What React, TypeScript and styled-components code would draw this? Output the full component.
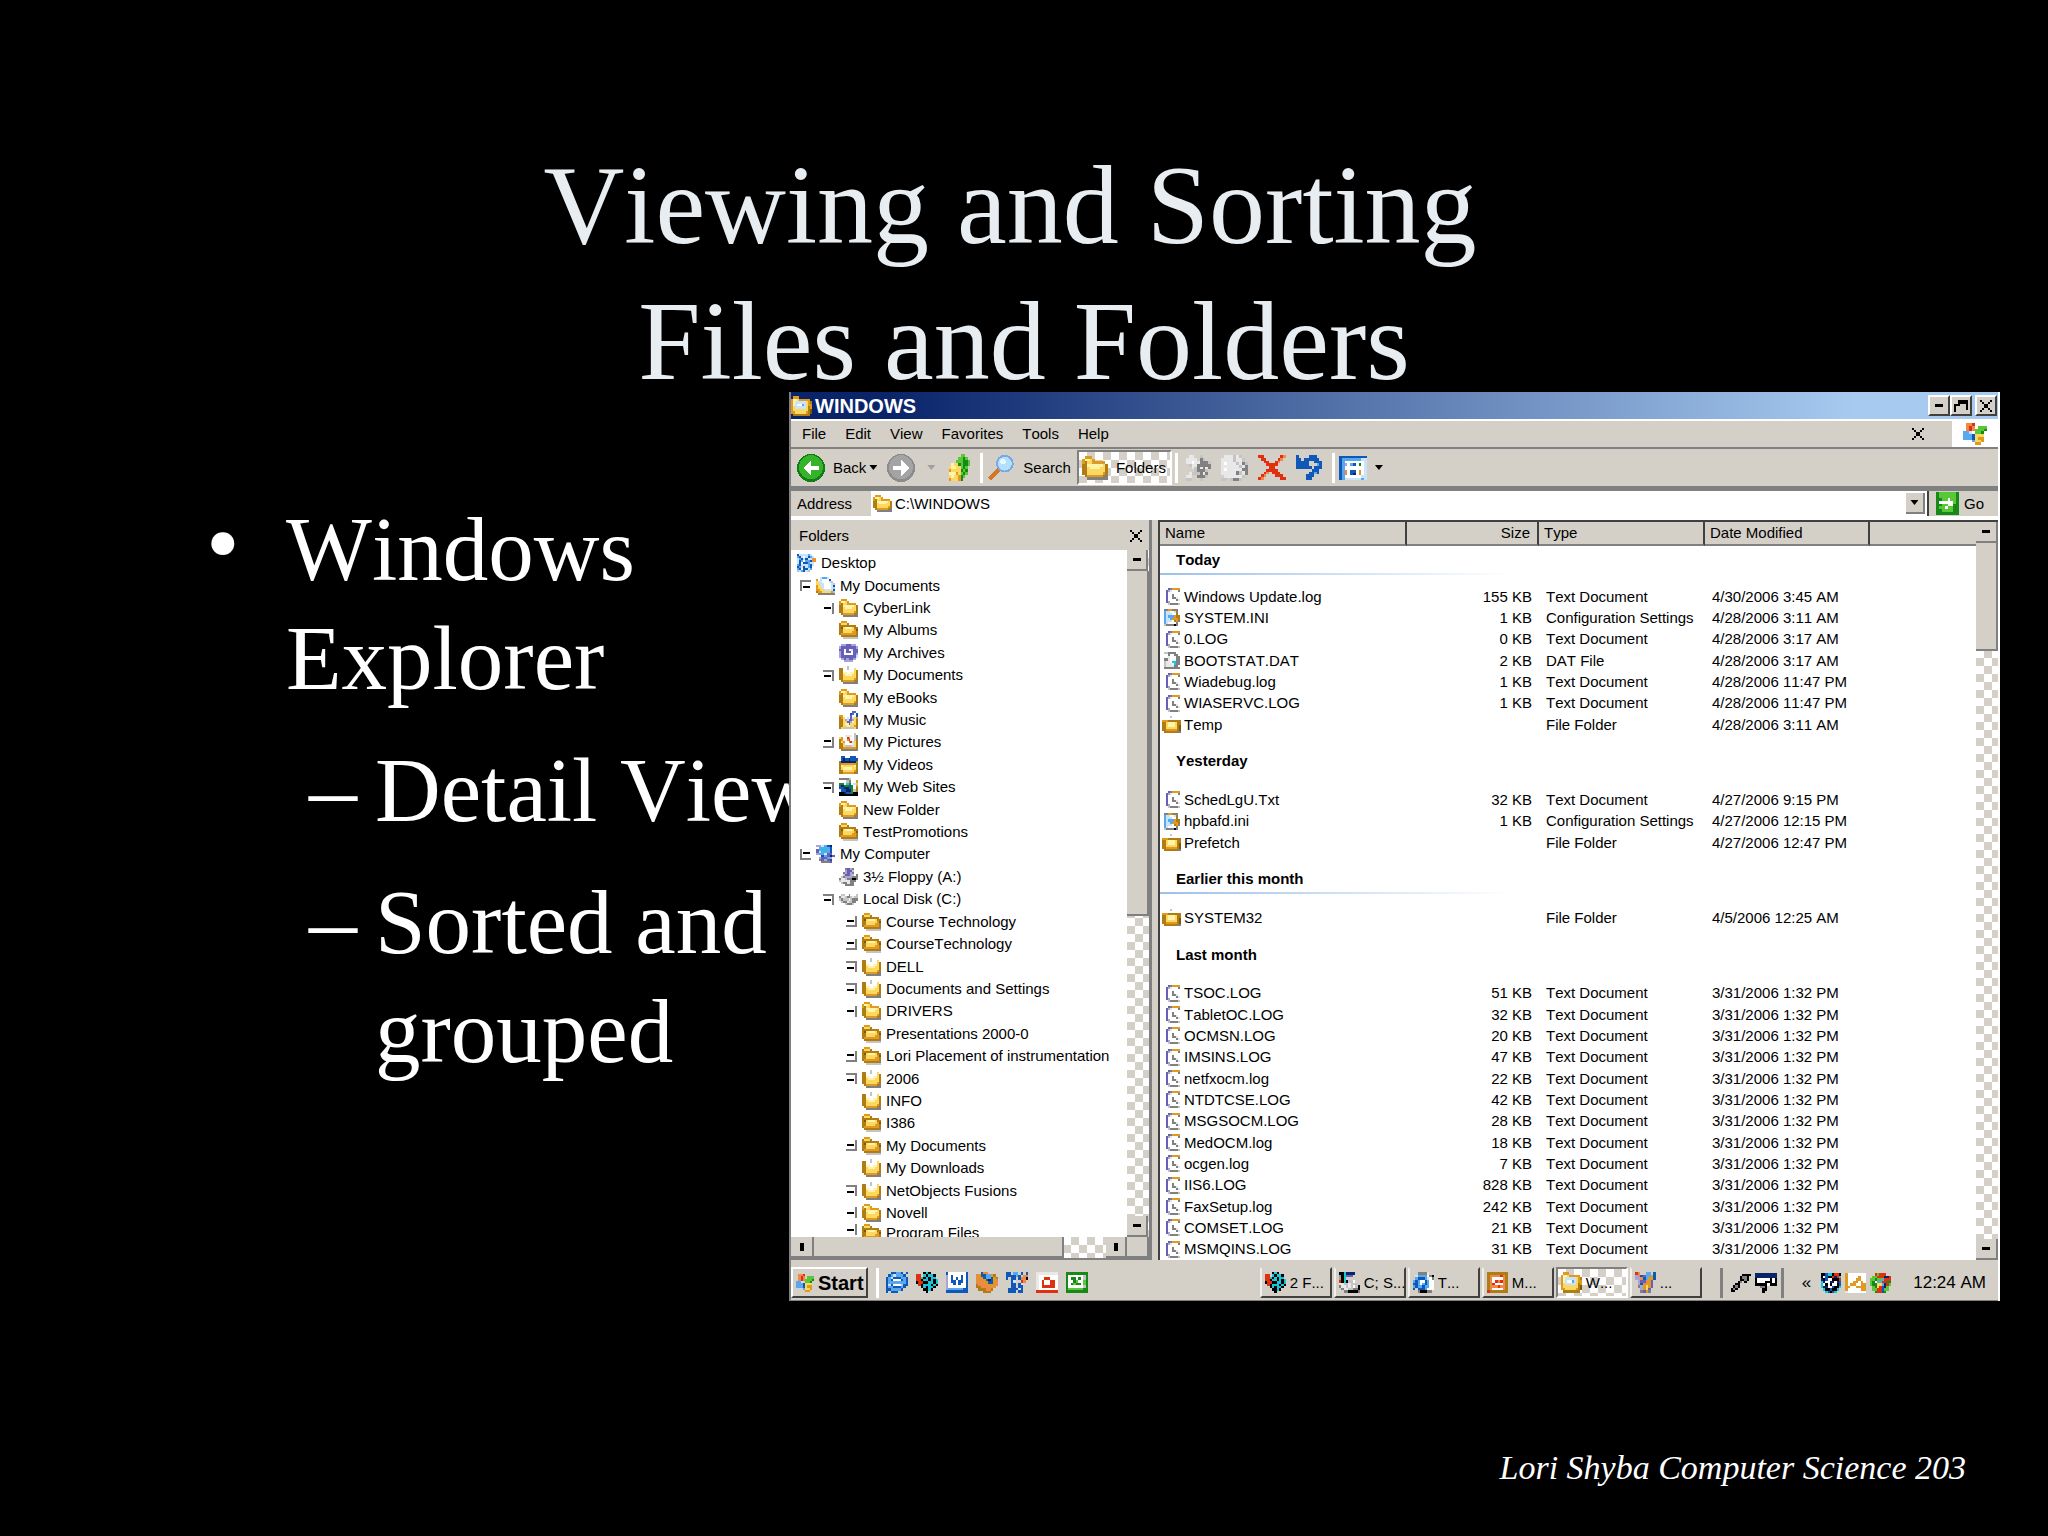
import React, { Fragment } from "react";
import styled, { createGlobalStyle, css } from "styled-components";

const face = "#d4d0c8";
const shadow = "#808080";
const dark = "#404040";
const sans = `"Liberation Sans", Arial, sans-serif`;
const serif = `"Liberation Serif", "Times New Roman", serif`;

const Global = createGlobalStyle`
  *, *::before, *::after { box-sizing: border-box; }
  body { margin: 0; background: #000; }
  button { font: inherit; color: inherit; padding: 0; border: 0; background: none; border-radius: 0; }
`;

const checker = css`
  background: repeating-conic-gradient(${face} 0 25%, #fff 0 50%) 0 0 / 16px 16px;
`;

/* ---------- pixel icons ---------- */

const palette: Record<string, string> = {
  k: "#000000", w: "#ffffff", g: "#808080", l: "#c4c4c4", n: "#e8e8e8",
  o: "#b07c14", y: "#fcd860", h: "#fff4a8", d: "#7c5808", a: "#e09a20",
  b: "#1058b8", c: "#58a8f0", s: "#c8e4fc", i: "#0a246a", t: "#18c8d8",
  r: "#e03010", p: "#6860b8", q: "#a8a4d8", e: "#188818", f: "#58c838", m: "#f08848",
};

const Svg = styled.svg`
  display: block;
  flex: none;
`;

function Pixels({ map, w, h }: { map: string[]; w: number; h: number }) {
  return (
    <Svg width={w} height={h} viewBox={`0 0 ${map[0].length} ${map.length}`} preserveAspectRatio="none" shapeRendering="crispEdges" aria-hidden="true">
      {map.flatMap((row, y) =>
        row.split("").map((ch, x) =>
          palette[ch] ? <rect key={`${x}-${y}`} x={x} y={y} width="1" height="1" fill={palette[ch]} /> : null
        )
      )}
    </Svg>
  );
}

const maps: Record<string, string[]> = {
  folder: [".aaa......", "ahhya.....", "aoyyaaaaa.", "oohhhhhhyo", "ooyhhhhyyo", "ooyyyyyyyo", "ooyyyyyyao", ".oaaaaaaog", "..gggggggg"],
  shut: [".aaa......", "oyyyo.....", "ooooooooo.", "odyhhhhyoo", "ooyyyyyyad", "ooyyyyyaao", "oaaaaaaaao", ".oooooooog", "..llllllll"],
  open: ["....l.....", "oo..l...y.", "oo.www..yo", "oohhwwhhyo", "ooyhhhhyyo", "ooyyyyyyyo", "ooyyyyyyao", ".oaaaaaaog", "..gggggggg"],
  flat: ["....l.....", "..........", "aaaooooooo", "ooyhhhhyoo", "ooyhhhhyod", "ooyyyyyyod", "ooaaaaaaod", ".ooooooogg"],
  docs: ["..scccs...", "a.swwwwb..", "ysswwwwsl.", "yysswwwwsl", "aysswwwwsb", "ayyswwwwsl", "aayysssssb", "oaayyyyyal", ".ogggggggg"],
  desktop: ["bsssscs..", "cbswsbcs.", "scbsbssam", "sbcwccbma", "sbwbbcss.", "cbssscbs.", "bcsbscb..", "cbwbbsc..", "lscbsl..."],
  archive: [".qqppqq.", "qppppppq", "ppwpwspp", "qpwppwpp", "qpwwwwpq", "qpppppps", ".qpqppq.", "..qqqq.."],
  music: [".......pp.", "......bp.b", "aa....p..b", "oay.s.psya", "ooyqsppqyo", "ooyyppqhyo", "ooyhhpyyyo", "ooyyhhyyao", "oyllllllyg"],
  pictures: ["........l.", "...nnnn.lg", "ya.wrmw.lg", "oa.wmrw.lo", "oyawwmrsyo", "ooywwwwnyo", "ooyllllsyo", "ooaaaaaaao", ".ogggggggg"],
  videos: [".bb...bbb.", ".bibbibbbb", "oiiiiiiiio", "oaaaaaaaao", "ohyyyyyyho", "oyhhhhhyyo", "ooyyyyyyao", "ooaaaaaaog"],
  web: ["ggggl...", "...lg..a", "ee.te.sl", "bieebe.a", "bbiibe.o", "nbbiielo", "kkibbekk", "kkkkkkkk"],
  computer: ["qqscbi.", ".ccccb.", "pcttcb.", "pscccb.", "qccspp.", "..bcpip", ".qppcq.", ".gpqpb.", "..gggp."],
  floppy: ["...gpqg..", "...qppl..", "..gqpqg..", "..lppql.g", ".lgqqqggg", "gnnlggkkg", "lnnnnggg.", ".lggngg..", "...gggg.."],
  disk: [".ll..g...l", "gnnlgglnll", "lglllwlggg", ".lggnllgg.", "...lgggl.."],
  text: [".pgaaaa", "pqnwwwg", "p.wwwww", "p.wgwww", "p.wggnw", "p.wwwgn", "pqwwwww", ".lggggl"],
  ini: ["ggaagog.", "csswwsg.", "cssswwo.", "cscccaoo", "csscaaao", "cssswoag", "cswwwwg.", "lggggkg."],
  dat: ["llgggg..", "..gwwgg.", "..nwwwgg", "ggnwwwgg", "lnnwttgg", "lnnnwtgg", "lnnnngg.", "gggggggg"],
  win: [".aaa......", "ahhyaaaaa.", "ahsssssyao", "ahswwcsyaa", "aysssssyoa", "ayyyyyyyod", "aayyyyyaod", ".oooooooo."],
  up: [".....ff..", "....ffef.", "...fffeef", ".hyyefeef", "yhhyyfef.", "ayyyyefe.", "hhhayfef.", "yhyyaef..", "ayyyae..."],
  copy: [".nn..l...", "nnnn.gl..", "nnwnngggl", ".lnnggggg", "..nlgngng", "...lgggl.", ".nlllgng.", "nn..gggl.", "ll...l..."],
  move: [".nnnlnl..", "nnnnlnnl.", "nwnnnlngl", "nnnnnnlng", "nwnnnnngg", "nnnnnglng", ".nnnnnnl.", "ll.lggl.."],
  del: ["rr......rm", ".rr....rm.", "..rr..rm..", "...rrrr...", "....rr....", "...rrrr...", "..rm.rrr..", ".rm...rrr.", "rm......rr"],
  undo: ["b....bbb..", "bb.bbbbbb.", "bbbbb..bbb", "bbbbb...cb", "bbbbbb.bbb", "......bbb.", ".....bbcb.", "....bbb...", "....bb...."],
  view: ["bbbbbbbbbb", "bcccccccss", "bcwwwwwwws", "bcqwcbwews", "bcwwwwwwws", "bcwwwwwwws", "bcmwbbwaws", "bcmwbiwaws", "bcwwwwwwss", "bcsssssscs"],
  go: ["effffffe", "effffffe", "eeffwffe", "ewwwwwfe", "eeffwwee", "effwffee", "eeffffee", "eeeeeeee"],
  flag: [".mmr....", ".mrm.fff", ".mrmfffe", "ccs.ffe.", "cccbyyy.", "cccbyaa.", "...cyya.", "....aa.."],
  ie: ["..bbccb.b", ".bcscccb.", "bcsbbbccb", "bcbwwwbcb", "bcccccccb", "bsbwwwlbb", "bccbbbcb.", "bbccccb..", "b.bbb...."],
  media: ["...ktk...", "rr.tkttk.", "rrtktktt.", "rrkttktkt", "krrkkttkt", ".rktttktk", "..ktkttk.", "...kktk..", "....k...."],
  word: ["bwwwwwwwb", "qwbwwwbwb", "qwbwbwbwb", "qwbbwbbwb", "qwwbwbwwb", "qwwwwwwwb", "qccccccbb", "bbbbbbbbb"],
  fox: ["..bmm....", "mabbccao.", "maabccbao", "mmaabibam", "mmmaabbam", "ommmmaaam", "oommmmam.", ".ooommo..", "...ooo..."],
  tools: ["bb.cc.b.b", "bbbbcb.mm", "b.bb.bmmk", "..bs..rm.", "..bb.bs..", "..bb.bb..", ".bbbbsb..", ".bbb.bb.."],
  ppt: ["nnnnnnnn", "nwwwwwww", "nwwrrwww", "nwrwwrrw", "nwrwwrrw", "nwrrrrrw", "nwwwwwww", "rrrrrrrr"],
  excel: ["eeeeeeeee", "ewwwwwwle", "eweewewle", "ewwefwwfe", "ewefeewfe", "ewwwwwwle", "effffffee", "eeeeeeeee"],
  notes: ["kktiiii..", "tktppp...", "mkt......", "rktkllw..", "nnllnlll.", "gnnlnlwlk", ".gnnllggk", "..ggkkkkg"],
  page: ["..ggggn..", ".sccccwgk", ".cbbbcswg", "cbcwwbcww", "bbcwcbcww", "cbccbccww", "b.bbbcwww", "..gkkkgg."],
  deck: ["oooooooo", "ommmmrmo", "omwwwwmo", "omwrmrmo", "omrwwwmo", "ommmrmmo", "omwwwwmo", "rooooooo"],
  paint: ["rm..cc.b", "qmbpccab", "qqmbcaab", ".qppmap.", ".qbmaap.", ".gqayap.", "..qayp..", "..gpag.."],
  plug: [".....kkkk", "....kggk.", "....kkgk.", "...kg.k..", "..kk.....", ".kgk.....", "kgk......", "kk......."],
  screen: ["iiiiiiiii", "iiiiiiiii", "kwwwwwkwk", "kwwwkkkwk", "kkkkkwkkk", "..ggk....", "...kk....", "...k....."],
  shield: ["kkbttkrrk", "kwbkkrirt", "ikbwwkkkr", "tiwwiiwib", "twkwkwwkb", "tiiwwbkkt", ".tkkbkkt.", "..tbkbt.."],
  wave: ["awwwwwww", "awwwwaww", "awwwaaww", "awwaawaw", "awaawwaa", "aawwaaaa", "awwwwwaa", "nwwwwwww"],
  ball: ["..rfrrr..", ".ffrrriir", "ffeffcrrr", "fewccrree", "feeyycirf", ".feyrbif.", ".ffrrbff.", "..errbe.."],
};

const Icon = ({ n, w = 20, h = 18 }: { n: string; w?: number; h?: number }) => <Pixels map={maps[n]} w={w} h={h} />;

function Circle({ tone, back }: { tone: "green" | "grey"; back?: boolean }) {
  const [edge, fill] = tone === "green" ? ["#147c14", "#34b428"] : ["#8c8c8c", "#a4a4a4"];
  return (
    <Svg width="28" height="28" viewBox="0 0 14 14" shapeRendering="crispEdges" aria-hidden="true">
      <circle cx="7" cy="7" r="7" fill={edge} />
      <circle cx="7" cy="6.6" r="6" fill={fill} />
      <path d={back ? "M3 7l4-4v3h4v2H7v3z" : "M11 7L7 3v3H3v2h4v3z"} fill="#fff" />
    </Svg>
  );
}

const Lens = () => (
  <Svg width="28" height="27" viewBox="0 0 14 14" shapeRendering="crispEdges" aria-hidden="true">
    <path d="M1 13l5-5" stroke="#d07828" strokeWidth="2.4" />
    <circle cx="9" cy="5" r="4.6" fill="#78a8e8" />
    <circle cx="9" cy="5" r="3.6" fill="#b4e0fc" />
    <circle cx="8" cy="4" r="1.4" fill="#e8f8ff" />
  </Svg>
);

/* ---------- slide ---------- */

const Slide = styled.main`
  position: relative;
  display: flex;
  flex-direction: column;
  min-height: 100vh;
  padding: 137px 0 46px;
  background: #000;
  color: #fff;
  font-family: ${serif};
  font-kerning: none;
  overflow: hidden;
`;

const Title = styled.h1`
  margin: 0 0 86px;
  text-align: center;
  font-size: 112px;
  line-height: 136px;
  font-weight: 400;
  color: #e8edf2;
`;

const Points = styled.ul`
  list-style: none;
  margin: 0;
  padding: 0 0 0 206px;
  width: 860px;
  font-size: 91px;
  line-height: 109px;
`;

const Point = styled.li`
  display: grid;
  grid-template-columns: 80px 1fr;
  &::before { content: "•"; font-size: 96px; line-height: 96px; }
`;

const SubPoints = styled.ul`
  list-style: none;
  grid-column: 1 / -1;
  margin: 0;
  padding: 0 0 0 103px;
`;

const SubPoint = styled.li`
  display: grid;
  grid-template-columns: 66px 1fr;
  margin-top: 23px;
  &::before { content: "–"; font-size: 96px; line-height: 106px; }
`;

const Footer = styled.footer`
  margin-top: auto;
  padding-right: 82px;
  text-align: right;
  font-size: 34px;
  line-height: 44px;
  font-style: italic;
`;

/* ---------- explorer window ---------- */

const Win = styled.section`
  position: absolute;
  left: 789px;
  right: 48px;
  top: 392px;
  height: 909px;
  display: flex;
  flex-direction: column;
  border: solid ${shadow};
  border-width: 0 2px 0 2px;
  border-right-color: #fff;
  background: ${face};
  color: #000;
  font-family: ${sans};
  font-size: 15px;
  line-height: 18px;
`;

const TitleBar = styled.header`
  display: flex;
  align-items: center;
  gap: 3px;
  flex: none;
  height: 29px;
  padding-right: 1px;
  border-bottom: 2px solid #fff;
  background: linear-gradient(90deg, #0a246a 8%, #a6caf0 88%);
`;

const WinTitle = styled.h2`
  margin: 0;
  flex: 1;
  font-size: 20px;
  line-height: 24px;
  color: #fff;
`;

const CapButton = styled.button<{ $apart?: boolean }>`
  display: grid;
  place-items: center;
  width: 22px;
  height: 21px;
  margin-left: ${(p) => (p.$apart ? 0 : -3)}px;
  background: ${face};
  border: solid ${dark};
  border-width: 2px;
  border-top-color: #fff;
  border-left-color: #fff;
`;

const MenuBar = styled.nav`
  display: flex;
  flex: none;
  align-items: center;
  height: 28px;
  padding-left: 11px;
  gap: 19px;
  border-bottom: 2px solid ${shadow};
`;

const DockClose = styled.button`
  margin: 0 9px 0 auto;
`;

const Brand = styled.div`
  display: grid;
  place-items: center;
  width: 46px;
  align-self: stretch;
  background: #fff;
`;

const ToolBar = styled.div`
  display: flex;
  flex: none;
  align-items: center;
  height: 37px;
  padding-left: 6px;
`;

const Tool = styled.button<{ $gap?: number }>`
  display: flex;
  align-items: center;
  gap: 8px;
  margin-right: ${(p) => p.$gap ?? 10}px;
`;

const Pressed = styled(Tool)`
  height: 35px;
  padding: 0 4px 0 3px;
  border: solid #fff;
  border-width: 2px;
  border-top-color: ${shadow};
  border-left-color: ${shadow};
  ${checker}
`;

const Rule = styled.span<{ $c?: string; $gap?: number }>`
  width: 3px;
  height: 30px;
  margin-right: ${(p) => p.$gap ?? 4}px;
  background: ${(p) => p.$c ?? "#fff"};
`;

const Arrow = styled.span<{ $dim?: boolean }>`
  width: 8px;
  height: 5px;
  background: ${(p) => (p.$dim ? "#a0a0a0" : "#000")};
  clip-path: polygon(0 0, 100% 0, 50% 100%);
`;

const AddressBar = styled.form`
  display: flex;
  flex: none;
  align-items: center;
  height: 34px;
  border-top: 5px solid ${shadow};
  border-bottom: 4px solid #fff;
`;

const AddressLabel = styled.label`
  width: 80px;
  padding-left: 6px;
`;

const Combo = styled.div`
  display: flex;
  flex: 1;
  align-items: center;
  height: 25px;
  padding: 2px;
  gap: 3px;
  background: #fff;
  border-right: 2px solid ${dark};
`;

const AddressInput = styled.input`
  flex: 1;
  min-width: 0;
  padding: 0;
  border: 0;
  outline: 0;
  font: inherit;
  background: none;
`;

const Go = styled.button`
  display: flex;
  align-items: center;
  gap: 5px;
  margin: 0 14px 0 7px;
`;

const Bevel = styled.button<{ $w?: number; $h?: number }>`
  display: grid;
  place-items: center;
  flex: none;
  width: ${(p) => p.$w ?? 21}px;
  height: ${(p) => p.$h ?? 21}px;
  background: ${face};
  border: solid ${shadow};
  border-width: 0 2px 2px 0;
`;

const Panes = styled.div`
  display: flex;
  flex: 1;
  min-height: 0;
`;

const FolderPane = styled.aside`
  display: flex;
  flex-direction: column;
  width: 361px;
  border-right: 3px solid ${shadow};
  border-bottom: 2px solid ${shadow};
`;

const PaneHead = styled.div`
  display: flex;
  flex: none;
  align-items: center;
  justify-content: space-between;
  height: 30px;
  padding: 2px 7px 0 8px;
`;

const TreeWrap = styled.div`
  display: flex;
  flex: 1;
  min-height: 0;
  background: #fff;
`;

const Tree = styled.ul`
  list-style: none;
  margin: 0;
  padding: 2px 0 0;
  flex: 1;
  min-width: 0;
  display: flex;
  flex-direction: column;
  overflow: hidden;
`;

const Node = styled.li<{ $level: number; $last?: boolean }>`
  display: flex;
  align-items: ${(p) => (p.$last ? "flex-start" : "center")};
  gap: 5px;
  flex: ${(p) => (p.$last ? "0 0 13px" : "1 1 0")};
  min-height: 0;
  padding-left: ${(p) => (p.$level < 0 ? 6 : 9 + p.$level * 23)}px;
  white-space: nowrap;
  overflow: hidden;
`;

const Toggle = styled.button<{ $kind: string }>`
  flex: none;
  width: 11px;
  height: 11px;
  border: 0 solid ${shadow};
  border-width: ${(p) => p.$kind};
  background: linear-gradient(#000, #000) center / 7px 2px no-repeat;
`;

const Blank = styled.span`
  flex: none;
  width: 11px;
`;

const Scroll = styled.div<{ $h?: boolean }>`
  display: flex;
  flex: none;
  flex-direction: ${(p) => (p.$h ? "row" : "column")};
  ${(p) => (p.$h ? "height: 21px" : "width: 22px")};
  ${checker}
`;

const Thumb = styled.div<{ $size: string; $h?: boolean }>`
  ${(p) => (p.$h ? "width" : "height")}: ${(p) => p.$size};
  background: ${face};
  border: solid ${shadow};
  border-width: 0 2px 2px 0;
`;

const Track = styled.div`
  flex: 1;
`;

const Mark = styled.span`
  width: 8px;
  height: 3px;
  background: #000;
`;

const Tick = styled.span`
  width: 4px;
  height: 8px;
  background: #000;
`;

const ListPane = styled.div`
  display: flex;
  flex: 1;
  min-width: 0;
  margin-left: 6px;
  border-left: 2px solid ${dark};
  border-top: 2px solid ${dark};
  background: #fff;
`;

const TableBox = styled.div`
  flex: 1;
  min-width: 0;
  height: 100%;
`;

const Table = styled.table`
  width: 100%;
  height: 100%;
  table-layout: fixed;
  border-collapse: separate;
  border-spacing: 0;
  white-space: nowrap;
`;

const Th = styled.th<{ $right?: boolean }>`
  height: 24px;
  padding: 0 7px 0 5px;
  text-align: ${(p) => (p.$right ? "right" : "left")};
  font-weight: 400;
  background: ${face};
  border-right: 2px solid ${dark};
  border-bottom: 2px solid ${shadow};
  &:last-child { border-right: 0; }
`;

const Td = styled.td<{ $right?: boolean }>`
  padding: 0 ${(p) => (p.$right ? 7 : 0)}px 0 ${(p) => (p.$right ? 0 : 7)}px;
  text-align: ${(p) => (p.$right ? "right" : "left")};
  overflow: hidden;
`;

const NameCell = styled.div`
  display: flex;
  align-items: center;
  gap: 4px;
  margin-left: -5px;
  height: 18px;
`;

const IconSlot = styled.span`
  display: grid;
  justify-items: end;
  width: 18px;
`;

const GroupTh = styled.th<{ $first?: boolean }>`
  height: ${(p) => (p.$first ? 40 : 54)}px;
  padding: ${(p) => (p.$first ? "0 0 10px" : "0")};
  text-align: left;
`;

const GroupName = styled.div<{ $line?: boolean }>`
  width: 350px;
  padding: 4px 0 4px 16px;
  border-bottom: 2px solid;
  border-image: ${(p) => (p.$line ? "linear-gradient(90deg, #9cc0e8, #fff)" : "linear-gradient(#fff, #fff)")} 1;
`;

const TaskBar = styled.footer`
  display: flex;
  flex: none;
  align-items: center;
  height: 41px;
  padding: 3px 12px 0 0;
  border-top: 2px solid ${face};
  border-bottom: 1px solid ${shadow};
  font-size: 17px;
  white-space: nowrap;
`;

const Start = styled.button`
  display: flex;
  align-items: center;
  gap: 4px;
  width: 77px;
  height: 31px;
  padding-left: 3px;
  margin-right: 8px;
  border: solid ${dark};
  border-width: 2px;
  border-top-color: #fff;
  border-left-color: #fff;
  font-size: 20px;
  font-weight: 700;
`;

const Quick = styled.div`
  display: flex;
  flex: 1;
  gap: 8px;
`;

const Task = styled.button<{ $on?: boolean }>`
  display: flex;
  align-items: center;
  gap: 4px;
  width: 72px;
  height: 31px;
  margin-right: 2px;
  padding-left: 3px;
  font-size: 15px;
  border: solid ${dark};
  border-width: 2px;
  border-top-color: ${(p) => (p.$on ? shadow : face)};
  border-left-color: ${(p) => (p.$on ? shadow : "#f0f0ec")};
  ${(p) => p.$on && checker}
  ${(p) => p.$on && "border-bottom-color: #fff; border-right-color: #fff;"}
`;

const Tray = styled.div`
  display: flex;
  align-items: center;
  gap: 4px;
  margin-left: 16px;
`;

const Chevron = styled.button`
  margin: 0 6px 0 2px;
`;

const Clock = styled.time`
  margin-left: 18px;
`;

const Cross = () => (
  <Svg width="12" height="12" viewBox="0 0 6 6" shapeRendering="crispEdges" aria-hidden="true">
    <path d="M0 0h1v1h1v1h2V1h1V0h1v1H5v1H4v2h1v1h1v1H5V5H4V4H2v1H1v1H0V5h1V4h1V2H1V1H0z" fill="#000" />
  </Svg>
);

const F = "folder", S = "shut", O = "open";
const TL = "2px 0 0 2px", BL = "0 0 2px 2px", TR = "2px 2px 0 0", BR = "0 2px 2px 0", R = "0 2px 0 0";

const tree: [number, string, string, string?][] = [
  [-1, "desktop", "Desktop"],
  [0, "docs", "My Documents", TL],
  [1, F, "CyberLink", R],
  [1, S, "My Albums"],
  [1, "archive", "My Archives"],
  [1, O, "My Documents", TR],
  [1, F, "My eBooks"],
  [1, "music", "My Music"],
  [1, "pictures", "My Pictures", BR],
  [1, "videos", "My Videos"],
  [1, "web", "My Web Sites", TR],
  [1, F, "New Folder"],
  [1, S, "TestPromotions"],
  [0, "computer", "My Computer", BL],
  [1, "floppy", "3½ Floppy (A:)"],
  [1, "disk", "Local Disk (C:)", TR],
  [2, S, "Course Technology", BR],
  [2, S, "CourseTechnology", BR],
  [2, O, "DELL", TR],
  [2, O, "Documents and Settings", TR],
  [2, F, "DRIVERS", R],
  [2, S, "Presentations 2000-0"],
  [2, S, "Lori Placement of instrumentation", BR],
  [2, O, "2006", TR],
  [2, O, "INFO"],
  [2, S, "I386"],
  [2, S, "My Documents", BR],
  [2, O, "My Downloads"],
  [2, O, "NetObjects Fusions", TR],
  [2, F, "Novell", R],
  [2, S, "Program Files", R],
];

type FileRow = [string, string, string, string, string];
const T = "Text Document", C = "Configuration Settings", D = "File Folder";
const groups: { name: string; line?: boolean; rows: FileRow[] }[] = [
  {
    name: "Today", line: true, rows: [
      ["text", "Windows Update.log", "155 KB", T, "4/30/2006 3:45 AM"],
      ["ini", "SYSTEM.INI", "1 KB", C, "4/28/2006 3:11 AM"],
      ["text", "0.LOG", "0 KB", T, "4/28/2006 3:17 AM"],
      ["dat", "BOOTSTAT.DAT", "2 KB", "DAT File", "4/28/2006 3:17 AM"],
      ["text", "Wiadebug.log", "1 KB", T, "4/28/2006 11:47 PM"],
      ["text", "WIASERVC.LOG", "1 KB", T, "4/28/2006 11:47 PM"],
      ["flat", "Temp", "", D, "4/28/2006 3:11 AM"],
    ],
  },
  {
    name: "Yesterday", rows: [
      ["text", "SchedLgU.Txt", "32 KB", T, "4/27/2006 9:15 PM"],
      ["ini", "hpbafd.ini", "1 KB", C, "4/27/2006 12:15 PM"],
      ["flat", "Prefetch", "", D, "4/27/2006 12:47 PM"],
    ],
  },
  { name: "Earlier this month", line: true, rows: [["flat", "SYSTEM32", "", D, "4/5/2006 12:25 AM"]] },
  {
    name: "Last month", rows: [
      ["text", "TSOC.LOG", "51 KB", T, "3/31/2006 1:32 PM"],
      ["text", "TabletOC.LOG", "32 KB", T, "3/31/2006 1:32 PM"],
      ["text", "OCMSN.LOG", "20 KB", T, "3/31/2006 1:32 PM"],
      ["text", "IMSINS.LOG", "47 KB", T, "3/31/2006 1:32 PM"],
      ["text", "netfxocm.log", "22 KB", T, "3/31/2006 1:32 PM"],
      ["text", "NTDTCSE.LOG", "42 KB", T, "3/31/2006 1:32 PM"],
      ["text", "MSGSOCM.LOG", "28 KB", T, "3/31/2006 1:32 PM"],
      ["text", "MedOCM.log", "18 KB", T, "3/31/2006 1:32 PM"],
      ["text", "ocgen.log", "7 KB", T, "3/31/2006 1:32 PM"],
      ["text", "IIS6.LOG", "828 KB", T, "3/31/2006 1:32 PM"],
      ["text", "FaxSetup.log", "242 KB", T, "3/31/2006 1:32 PM"],
      ["text", "COMSET.LOG", "21 KB", T, "3/31/2006 1:32 PM"],
      ["text", "MSMQINS.LOG", "31 KB", T, "3/31/2006 1:32 PM"],
    ],
  },
];

const quick = ["ie", "media", "word", "fox", "tools", "ppt", "excel"];
const tasks: [string, string][] = [["media", "2 F..."], ["notes", "C; S..."], ["page", "T..."], ["deck", "M..."], ["win", "W..."], ["paint", "..."]];

export default function App() {
  return (
    <>
      <Global />
      <Slide>
        <Title>
          Viewing and Sorting&nbsp;
          <br />
          Files and Folders
        </Title>
        <Points>
          <Point>
            Windows Explorer
            <SubPoints>
              <SubPoint>Detail View</SubPoint>
              <SubPoint>Sorted and grouped</SubPoint>
            </SubPoints>
          </Point>
        </Points>
        <Footer>Lori Shyba Computer Science 203</Footer>

        <Win aria-label="WINDOWS">
          <TitleBar>
            <Icon n="win" w={21} h={20} />
            <WinTitle>WINDOWS</WinTitle>
            <CapButton aria-label="Minimize"><Mark /></CapButton>
            <CapButton aria-label="Restore">
              <Svg width="14" height="12" viewBox="0 0 7 6" shapeRendering="crispEdges" aria-hidden="true">
                <path d="M2 0h5v5H6V2H3v1H1v3H0V2h2z" fill="#000" />
              </Svg>
            </CapButton>
            <CapButton $apart aria-label="Close"><Cross /></CapButton>
          </TitleBar>
          <MenuBar>
            {["File", "Edit", "View", "Favorites", "Tools", "Help"].map((m) => <button key={m}>{m}</button>)}
            <DockClose aria-label="Close pane"><Cross /></DockClose>
            <Brand><Icon n="flag" w={24} h={22} /></Brand>
          </MenuBar>
          <ToolBar>
            <Tool $gap={3}><Circle tone="green" back />Back</Tool>
            <Tool $gap={10} aria-label="Back history"><Arrow /></Tool>
            <Tool $gap={12} aria-label="Forward"><Circle tone="grey" /></Tool>
            <Tool $gap={14} aria-label="Forward history"><Arrow $dim /></Tool>
            <Tool aria-label="Up"><Icon n="up" w={21} h={27} /></Tool>
            <Rule />
            <Tool $gap={6}><Lens />Search</Tool>
            <Pressed $gap={3}><Icon n="folder" w={26} h={24} />Folders</Pressed>
            <Rule $gap={8} />
            <Tool aria-label="Copy to"><Icon n="copy" w={25} h={26} /></Tool>
            <Tool aria-label="Move to"><Icon n="move" w={27} h={26} /></Tool>
            <Tool aria-label="Delete"><Icon n="del" w={28} h={25} /></Tool>
            <Tool aria-label="Undo"><Icon n="undo" w={26} h={25} /></Tool>
            <Rule />
            <Tool aria-label="Views"><Icon n="view" w={28} h={24} /><Arrow /></Tool>
          </ToolBar>
          <AddressBar onSubmit={(e) => e.preventDefault()}>
            <AddressLabel htmlFor="address">Address</AddressLabel>
            <Combo>
              <Icon n="folder" w={19} h={17} />
              <AddressInput id="address" defaultValue="C:\WINDOWS" />
              <Bevel type="button" $w={19} aria-label="Show addresses"><Arrow /></Bevel>
            </Combo>
            <Go><Icon n="go" w={23} h={23} />Go</Go>
          </AddressBar>
          <Panes>
            <FolderPane>
              <PaneHead>Folders<button aria-label="Close folders"><Cross /></button></PaneHead>
              <TreeWrap>
                <Tree>
                  {tree.map(([level, icon, label, box], i) => (
                    <Node key={i} $level={level} $last={i === tree.length - 1}>
                      {level >= 0 && (box ? <Toggle $kind={box} aria-label={`Toggle ${label}`} /> : <Blank />)}
                      <Icon n={icon} w={19} h={icon === "disk" ? 11 : 18} />
                      {label}
                    </Node>
                  ))}
                </Tree>
                <Scroll>
                  <Bevel aria-label="Scroll up"><Mark /></Bevel>
                  <Thumb $size="345px" />
                  <Track />
                  <Bevel aria-label="Scroll down"><Mark /></Bevel>
                </Scroll>
              </TreeWrap>
              <Scroll $h>
                <Bevel $w={23} aria-label="Scroll left"><Tick /></Bevel>
                <Thumb $h $size="250px" />
                <Track />
                <Bevel aria-label="Scroll right"><Tick /></Bevel>
                <Thumb $h $size="22px" />
              </Scroll>
            </FolderPane>
            <ListPane>
              <TableBox>
                <Table>
                  <colgroup>
                    <col style={{ width: 247 }} />
                    <col style={{ width: 132 }} />
                    <col style={{ width: 166 }} />
                    <col style={{ width: 165 }} />
                    <col />
                  </colgroup>
                  <thead>
                    <tr><Th>Name</Th><Th $right>Size</Th><Th>Type</Th><Th>Date Modified</Th><Th aria-label="More" /></tr>
                  </thead>
                  <tbody>
                    {groups.map((g, gi) => (
                      <Fragment key={g.name}>
                        <tr>
                          <GroupTh colSpan={5} $first={gi === 0}>
                            <GroupName $line={g.line}>{g.name}</GroupName>
                          </GroupTh>
                        </tr>
                        {g.rows.map(([icon, name, size, type, date]) => (
                          <tr key={name}>
                            <Td>
                              <NameCell>
                                <IconSlot><Icon n={icon} w={icon === "flat" ? 19 : icon === "text" ? 14 : 16} h={17} /></IconSlot>
                                {name}
                              </NameCell>
                            </Td>
                            <Td $right>{size}</Td>
                            <Td>{type}</Td>
                            <Td>{date}</Td>
                            <td />
                          </tr>
                        ))}
                      </Fragment>
                    ))}
                  </tbody>
                </Table>
              </TableBox>
              <Scroll>
                <Bevel $w={22} aria-label="Scroll list up"><Mark /></Bevel>
                <Thumb $size="108px" />
                <Track />
                <Bevel $w={22} aria-label="Scroll list down"><Mark /></Bevel>
              </Scroll>
            </ListPane>
          </Panes>
          <TaskBar>
            <Start><Icon n="flag" w={18} h={18} />Start</Start>
            <Rule $gap={7} />
            <Quick>
              {quick.map((n) => <button key={n} aria-label={n}><Icon n={n} w={22} h={21} /></button>)}
            </Quick>
            {tasks.map(([n, label]) => (
              <Task key={label} $on={n === "win"}><Icon n={n} w={21} h={21} />{label}</Task>
            ))}
            <Tray>
              <Rule $c={shadow} />
              <Icon n="plug" w={20} h={18} />
              <Icon n="screen" w={22} h={20} />
              <Rule $c={shadow} $gap={12} />
              <Chevron aria-label="Show hidden icons">«</Chevron>
              <Icon n="shield" w={20} h={20} />
              <Icon n="wave" w={21} h={20} />
              <Icon n="ball" w={21} h={20} />
              <Clock>12:24 AM</Clock>
            </Tray>
          </TaskBar>
        </Win>
      </Slide>
    </>
  );
}
